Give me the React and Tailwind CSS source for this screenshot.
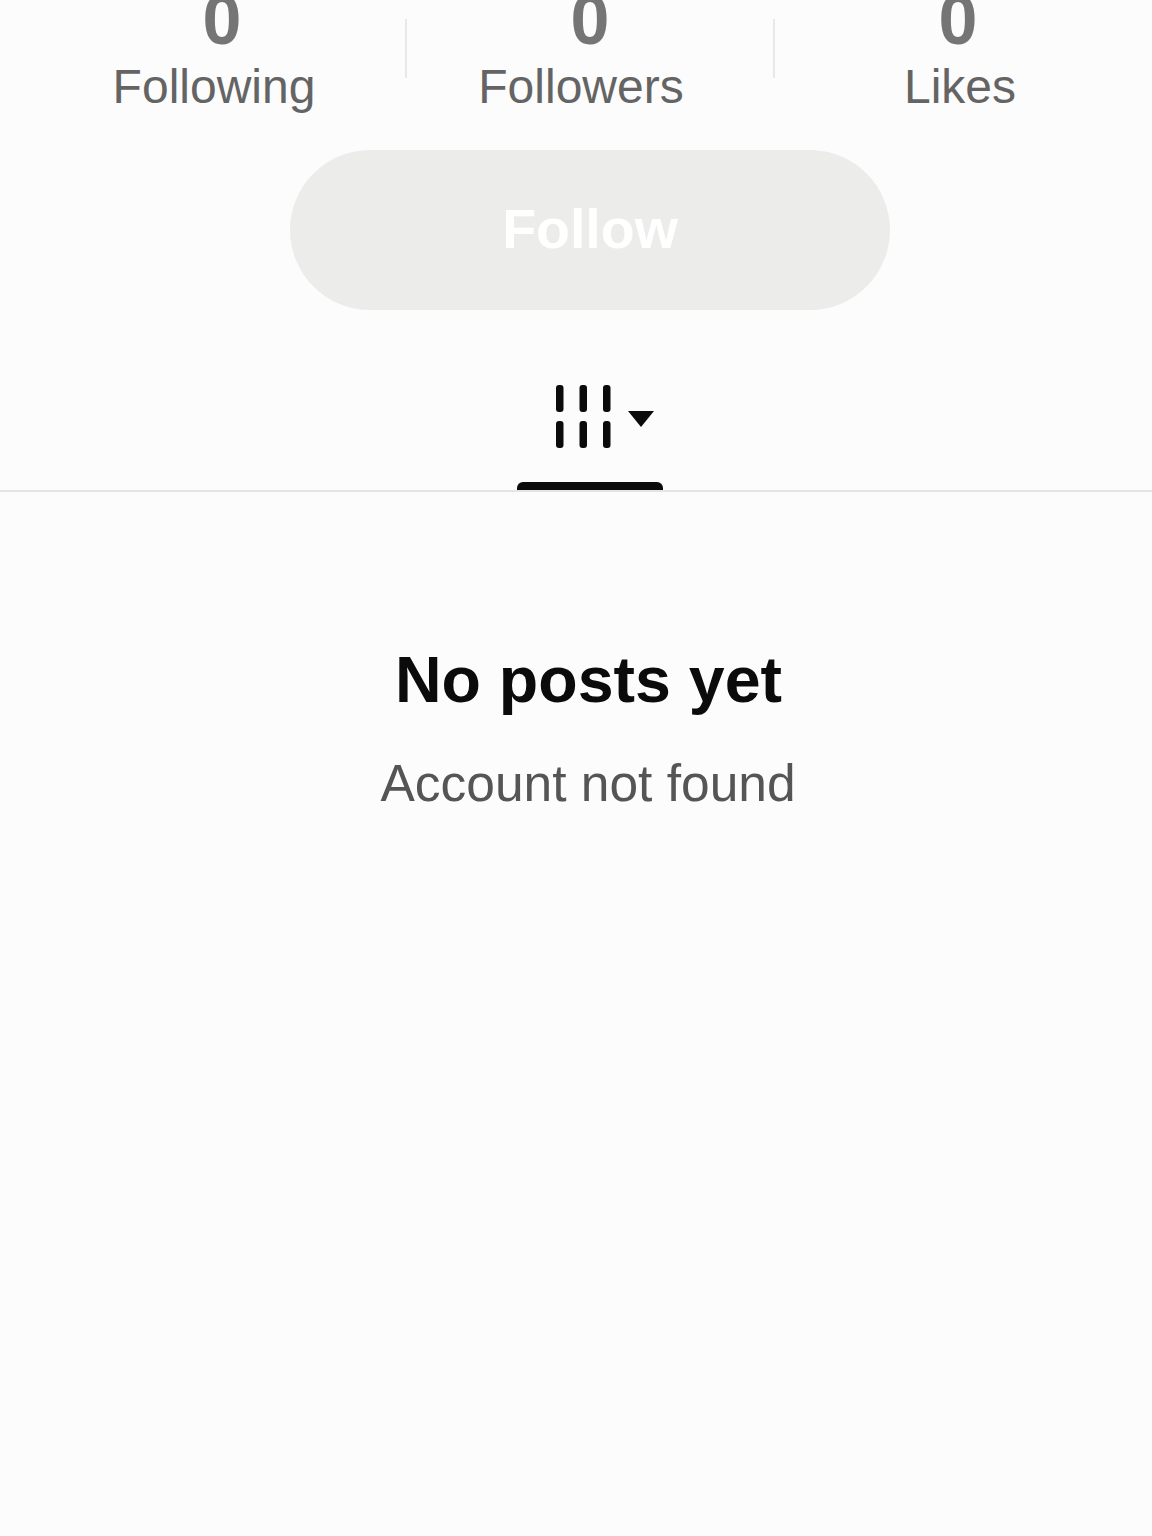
import React from "react";

const stats = [
    { value: "0", label: "Following", labelClass: "-ml-4" },
    { value: "0", label: "Followers", labelClass: "-ml-[18px]" },
    { value: "0", label: "Likes", labelClass: "ml-1" },
];

const GridIcon = () => (
    <svg width="56" height="64" viewBox="0 0 56 64" fill="#0b0b0b">
        {/* two rows of three short bars */}
        <rect x="0" y="0" width="7.5" height="27" rx="3" />
        <rect x="23.5" y="0" width="7.5" height="27" rx="3" />
        <rect x="47" y="0" width="7.5" height="27" rx="3" />
        <rect x="0" y="36" width="7.5" height="27" rx="3" />
        <rect x="23.5" y="36" width="7.5" height="27" rx="3" />
        <rect x="47" y="36" width="7.5" height="27" rx="3" />
    </svg>
);

const App = () => {
    return (
        <div className="h-[1536px] w-[1152px] overflow-hidden bg-[#fcfcfc] font-['Liberation_Sans',Arial,sans-serif]">
            {/* Stats, the top of the numbers is cut off by the screen edge */}
            <div className="-mt-[15px] ml-[38px] grid h-[135px] w-[1104px] grid-cols-3">
                {stats.map((stat, i) => (
                    <div key={stat.label} className="relative flex flex-col items-center">
                        <div className="h-[70px] text-[70px] leading-[70px] font-bold text-[#757575]">{stat.value}</div>
                        <div className={`mt-[5px] text-[48px] leading-[54px] text-[#646464] ${stat.labelClass}`}>{stat.label}</div>
                        {i < 2 && <div className="absolute top-[34px] right-[-1px] h-[59px] w-[2px] bg-[#e8e8e8]" />}
                    </div>
                ))}
            </div>

            {/* Follow button */}
            <div className="mt-[30px] ml-[28px] flex justify-center">
                <button className="flex h-[160px] w-[600px] items-center justify-center rounded-[80px] bg-[#ececeb] text-[55.5px] font-bold text-white">
                    Follow
                </button>
            </div>

            {/* Tab bar */}
            <div className="mt-[75px] flex h-[107px] flex-col items-center border-b-2 border-[#e4e4e4]">
                <div className="ml-[58px] flex h-[99px] items-start">
                    <GridIcon />
                    <svg width="26" height="16" viewBox="0 0 26 16" className="mt-[26px] ml-[16px]" fill="#0b0b0b">
                        <path d="M0 0H26L13 16Z" />
                    </svg>
                </div>
                <div className="ml-[28px] h-[8px] w-[146px] rounded-t-[6px] bg-[#0b0b0b]" />
            </div>

            {/* Empty state */}
            <div className="mt-[150px] ml-[28px] flex flex-col items-center">
                <div className="-ml-[3px] text-[64.5px] leading-[76px] font-bold text-[#0b0b0b]">No posts yet</div>
                <div className="mt-[35px] -ml-[4px] text-[51.5px] leading-[60px] text-[#555555]">Account not found</div>
            </div>
        </div>
    );
};

export default App;
